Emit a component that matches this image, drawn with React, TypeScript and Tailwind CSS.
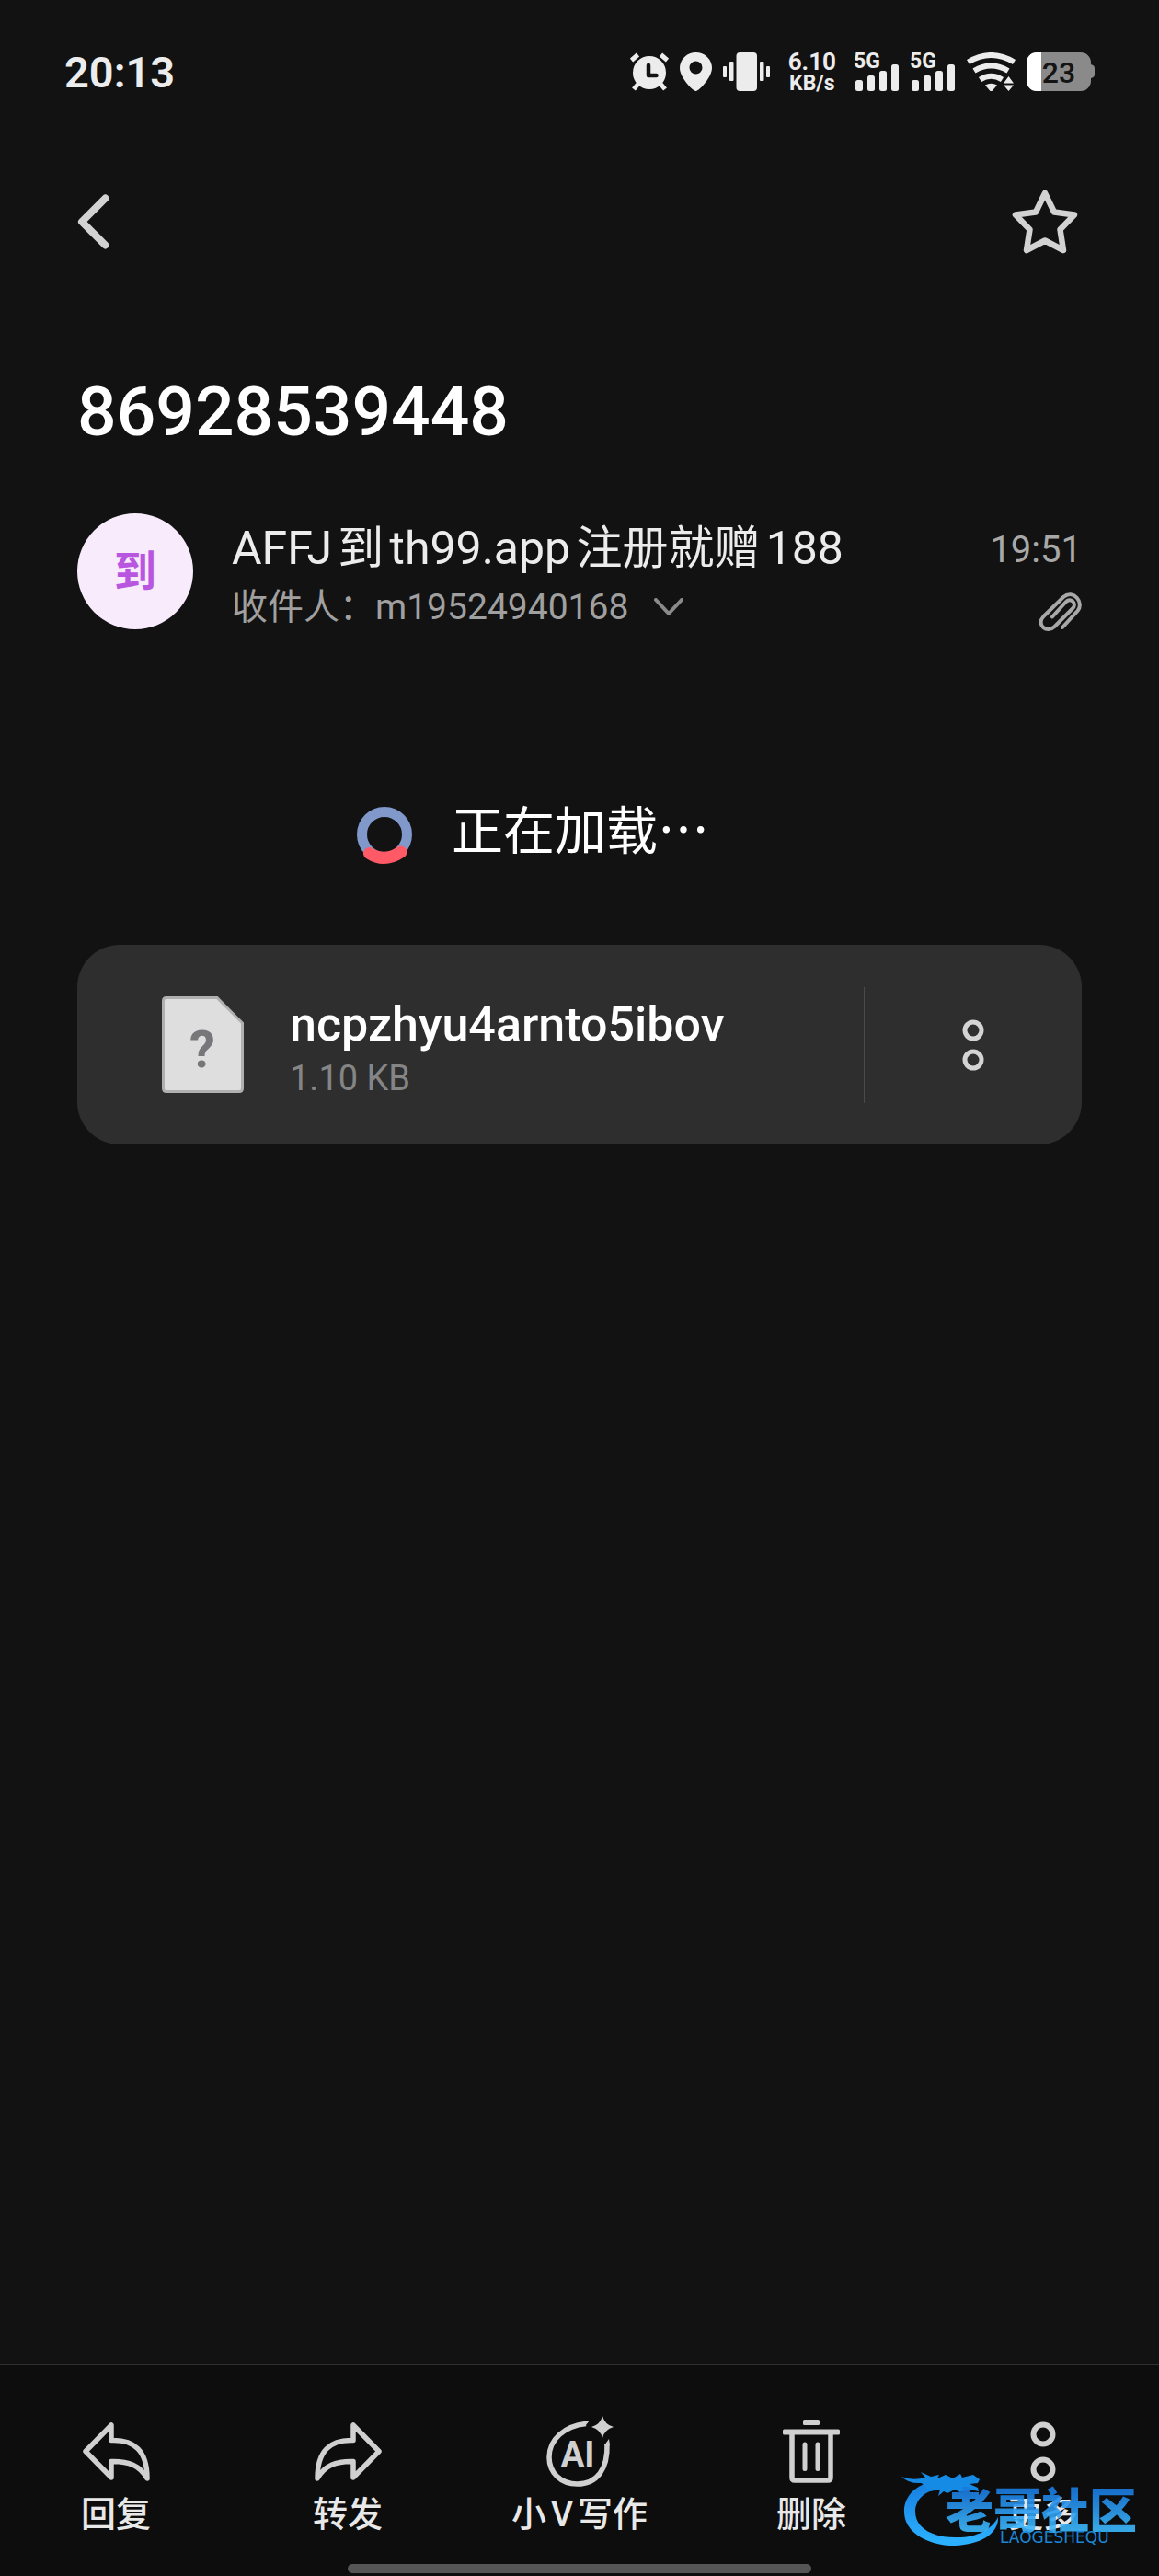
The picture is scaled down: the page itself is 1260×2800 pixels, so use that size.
import type { ReactNode } from "react"

type ToolbarAction = {
    key: string
    label: string
    icon: ReactNode
}

function AlarmIcon() {
    return (
        <svg width="42" height="42" viewBox="0 0 42 42" fill="none" aria-hidden="true">
            <circle cx="21" cy="22" r="18" fill="#ececec" />
            <path d="M1.500 8.500 8.500 2.500M40.500 8.500 33.500 2.500" stroke="#ececec" strokeWidth="5" />
            <path d="M9 34 4 40M33 34l5 6" stroke="#ececec" strokeWidth="5" />
            <path d="M20 14v11h8.500" stroke="#121212" strokeWidth="4.500" strokeLinecap="round" strokeLinejoin="round" />
        </svg>
    )
}

function LocationIcon() {
    return (
        <svg width="35" height="42" viewBox="0 0 35 42" fill="#ececec" fillRule="evenodd" aria-hidden="true">
            <path d="M17.500 42C14 42 0 27 0 17a17.500 17 0 0 1 35 0c0 10-14 25-17.500 25ZM17.500 9.500a7 7 0 1 0 0 14 7 7 0 0 0 0-14Z" />
        </svg>
    )
}

function VibrateIcon() {
    return (
        <svg width="51" height="42" viewBox="0 0 51 42" fill="#ececec" aria-hidden="true">
            <rect x="14.500" width="22.500" height="42" rx="4" />
            <rect x="7" y="10" width="4.500" height="21" rx="1" />
            <rect x="40" y="10" width="4.500" height="21" rx="1" />
            <rect y="15" width="4" height="12" rx="1" />
            <rect x="47" y="15" width="4" height="12" rx="1" />
        </svg>
    )
}

function SignalIcon() {
    return (
        <svg className="overflow-visible" width="49" height="42" viewBox="0 0 49 42" fill="#ececec" aria-label="5G">
            <text x="-1" y="17" fontSize="23" fontWeight="700">5G</text>
            <rect x="1" y="30" width="8" height="12" rx="2.500" />
            <rect x="14" y="25" width="8" height="17" rx="2.500" />
            <rect x="27" y="20" width="8" height="22" rx="2.500" />
            <rect x="40" y="13" width="8" height="29" rx="2.500" />
        </svg>
    )
}

function WifiIcon() {
    return (
        <svg width="53" height="42" viewBox="0 0 53 42" fill="none" aria-hidden="true">
            <path d="M1.500 10.500Q26.500-4.500 51.500 10.500M8 20Q26.500 9 45 20M14.500 29.500Q26.500 22 38.500 29.500" stroke="#ececec" strokeWidth="6" />
            <path d="M20 35.500Q26.500 32 33 35.500L28 41.500Q26.500 42.500 25 41.500Z" fill="#ececec" />
            <path d="M38 34.500 45.500 24 53 34.500 45.500 44Z" fill="#121212" />
            <path d="M40 33.500h11L45.500 26ZM40 35.500h11L45.500 42Z" fill="#ececec" />
        </svg>
    )
}

function BatteryIcon() {
    return (
        <svg className="overflow-visible" width="74" height="42" viewBox="0 0 74 42" aria-label="23%">
            <path d="M11 0h48a11 11 0 0 1 11 11v2q4 1 4 4v7q0 3-4 4v3a11 11 0 0 1-11 11H11A11 11 0 0 1 0 31V11A11 11 0 0 1 11 0Z" fill="#8a8a8a" />
            <path d="M16 0v42h-5A11 11 0 0 1 0 31V11A11 11 0 0 1 11 0Z" fill="#fff" />
            <text x="35" y="33" fontSize="32" fontWeight="500" textAnchor="middle" fill="#141414">23</text>
        </svg>
    )
}

function BackIcon() {
    return (
        <svg width="35" height="60" viewBox="0 0 35 60" fill="none" aria-hidden="true">
            <path d="M30.500 4.500 5 30l25.500 25.500" stroke="#d2d2d2" strokeWidth="8" strokeLinecap="round" strokeLinejoin="round" />
        </svg>
    )
}

function StarIcon() {
    return (
        <svg width="72" height="70" viewBox="0 0 72 70" fill="none" aria-hidden="true">
            <path d="M36 4 46 24.500 68 27.500 52.500 43.500 56 66 36 55.500 16 66 19.500 43.500 4 27.500 26 24.500Z" stroke="#d2d2d2" strokeWidth="6.500" strokeLinejoin="round" />
        </svg>
    )
}

function PaperclipIcon() {
    return (
        <svg width="47" height="42" viewBox="0 0 47 42" fill="none" role="img" aria-label="附件">
            <path
                d="M26 38 42.500 20C50 11 38-4 27 5L5.500 26C-3 35 9 45 17.500 37L37.500 17C42 11 34.500 5 29.500 10.500L15 26.500"
                stroke="#a8a8a8"
                strokeWidth="4"
                strokeLinecap="round"
            />
        </svg>
    )
}

function UnknownFileIcon() {
    return (
        <svg className="shrink-0" width="89" height="105" viewBox="0 0 89 105" aria-hidden="true">
            <path d="M5 1.500H60L87.500 29V100q0 3.500-3.500 3.500H5Q1.500 103.500 1.500 100V5Q1.500 1.500 5 1.500Z" fill="#dedede" stroke="#b0b0b0" strokeWidth="3" />
            <text x="44" y="77" fontSize="56" fontWeight="700" textAnchor="middle" fill="#77777b">?</text>
        </svg>
    )
}

function ReplyIcon() {
    return (
        <svg width="73" height="64" viewBox="0 0 73 64" fill="none" stroke="#d0d0d0" strokeWidth="5.500" strokeLinejoin="round" aria-hidden="true">
            <path d="M3 31.500 31 3V19.500C56 18.500 70 31 70 61 62 47 50 42 31 42.500V60Z" />
        </svg>
    )
}

function ForwardIcon() {
    return (
        <svg width="73" height="64" viewBox="0 0 73 64" fill="none" stroke="#d0d0d0" strokeWidth="5.500" strokeLinejoin="round" aria-hidden="true">
            <path d="M70 31.500 42 3V19.500C17 18.500 3 31 3 61 11 47 23 42 42 42.500V60Z" />
        </svg>
    )
}

function AiIcon() {
    return (
        <svg width="73" height="77" viewBox="0 0 73 77" fill="none" aria-hidden="true">
            <path d="M43 8.500C20 11 3 25 3 45 3 62 16 74 33.500 74 55 74 67 58 66 30" stroke="#d0d0d0" strokeWidth="5.500" />
            <path d="M40 6 47 5 42 11ZM63 32 68 25 69 32Z" fill="#d0d0d0" />
            <path d="M61 0Q63.500 9.500 73 12 63.500 14.500 61 24 58.500 14.500 49 12 58.500 9.500 61 0Z" fill="#d0d0d0" />
            <text x="34" y="55" fontSize="38" fontWeight="700" textAnchor="middle" fill="#d0d0d0">AI</text>
        </svg>
    )
}

function TrashIcon() {
    return (
        <svg width="62" height="69" viewBox="0 0 62 69" fill="none" aria-hidden="true">
            <rect x="22" width="18" height="6" rx="1.500" fill="#d0d0d0" />
            <rect y="10.500" width="62" height="6" rx="1.500" fill="#d0d0d0" />
            <path d="M10 14V63q0 3 3 3H49q3 0 3-3V14" stroke="#d0d0d0" strokeWidth="5.500" />
            <path d="M24 27V53.500M38 27V53.500" stroke="#d0d0d0" strokeWidth="5" strokeLinecap="round" />
        </svg>
    )
}

function MoreIcon() {
    return (
        <svg width="28" height="66" viewBox="0 0 28 66" fill="none" stroke="#d0d0d0" strokeWidth="6" aria-hidden="true">
            <circle cx="14" cy="14" r="10.500" />
            <circle cx="14" cy="52" r="10.500" />
        </svg>
    )
}

// Community logo shown over the right end of the toolbar
function CommunityBadge() {
    return (
        <svg
            className="pointer-events-none absolute right-5 bottom-8 overflow-visible"
            width="260"
            height="86"
            viewBox="0 0 260 86"
            role="img"
            aria-label="老哥社区 LAOGESHEQU"
        >
            <defs>
                <linearGradient id="badgeBlue" gradientUnits="userSpaceOnUse" x1="0" y1="10" x2="0" y2="80">
                    <stop offset="0" stopColor="#1478dd" />
                    <stop offset="1" stopColor="#2bb0ff" />
                </linearGradient>
                <linearGradient id="badgeText" gradientUnits="userSpaceOnUse" x1="0" y1="26" x2="0" y2="66">
                    <stop offset="0" stopColor="#1a7ce0" />
                    <stop offset="1" stopColor="#3bb6fc" />
                </linearGradient>
            </defs>
            <path
                d="M46 15C16 14 2 32 3 49 4 72 30 85 58 85 86 84 106 72 105 54 98 68 80 77 58 76 34 76 15 66 15 48 15 34 28 23 44 24Z"
                fill="url(#badgeBlue)"
            />
            <path
                d="M0 10Q12 15 26 11L21 5 32 10 41 8 39 12 48 8 56 12 64 7 66 11 78 8 85 13 83 17 74 18 83 22 84 26 74 24 64 27 58 24 50 28 46 26 40 31 42 24 30 26 22 17Q8 18 0 10Z"
                fill="#168be6"
            />
            <text x="48" y="66" fontSize="52" fontWeight="900" fill="url(#badgeText)" fillOpacity="0.9">老哥社区</text>
            <text x="107" y="82" fontSize="17" fill="#1c86d6" fontFamily="'DejaVu Sans', sans-serif">LAOGESHEQU</text>
        </svg>
    )
}

const actions: ToolbarAction[] = [
    { key: "reply", label: "回复", icon: <ReplyIcon /> },
    { key: "forward", label: "转发", icon: <ForwardIcon /> },
    { key: "write", label: "小V写作", icon: <AiIcon /> },
    { key: "delete", label: "删除", icon: <TrashIcon /> },
    { key: "more", label: "更多", icon: <MoreIcon /> },
]

function StatusBar() {
    return (
        <div className="flex h-[42px] items-center justify-between px-[70px] text-[#ececec]">
            <span className="pt-0.5 text-[47px] leading-[48px] font-semibold">20:13</span>
            <div className="flex items-center gap-3">
                <AlarmIcon />
                <LocationIcon />
                <VibrateIcon />
                <div className="mx-2 flex flex-col items-center pt-0.5 font-bold">
                    <span className="text-[26px] leading-[24px]">6.10</span>
                    <span className="text-[23px] leading-[24px]">KB/s</span>
                </div>
                <SignalIcon />
                <SignalIcon />
                <WifiIcon />
                <BatteryIcon />
            </div>
        </div>
    )
}

function AttachmentCard({ name, size }: { name: string; size: string }) {
    return (
        <div className="flex h-[217px] items-center rounded-[46px] bg-[#2e2e2e]">
            <div className="flex min-w-0 flex-1 items-center gap-[50px] pl-[92px]">
                <UnknownFileIcon />
                <div className="min-w-0 pt-2">
                    <p className="truncate text-[52px] leading-[64px] font-medium text-white">{name}</p>
                    <p className="text-[38px] leading-[52px] text-[#858585]">{size}</p>
                </div>
            </div>
            <div className="h-[126px] w-px bg-[#4a4a4a]" />
            <button type="button" aria-label="附件选项" className="flex h-full w-[236px] items-center justify-center">
                <svg width="24" height="56" viewBox="0 0 24 56" fill="none" stroke="#d4d4d4" strokeWidth="5" aria-hidden="true">
                    <circle cx="12" cy="12" r="9" />
                    <circle cx="12" cy="44" r="9" />
                </svg>
            </button>
        </div>
    )
}

function App() {
    return (
        <div
            lang="zh-CN"
            className="flex min-h-screen flex-col bg-[#121212] pt-[57px] font-[Roboto,'Noto_Sans_CJK_SC',sans-serif] text-white [text-autospace:normal]"
        >
            <StatusBar />

            <header className="mt-[107px] flex h-[70px] items-center justify-between pr-[88px] pl-[84px]">
                <button type="button" aria-label="返回">
                    <BackIcon />
                </button>
                <button type="button" aria-label="收藏">
                    <StarIcon />
                </button>
            </header>

            <main className="flex-1 px-[84px]">
                <h1 className="mt-[126px] text-[75px] leading-[90px] font-medium">86928539448</h1>

                <section className="mt-[66px] flex items-start">
                    <div className="flex size-[126px] items-center justify-center rounded-full bg-[#f8ebfc] text-[46px] font-bold text-[#b956e0]">
                        到
                    </div>
                    <div className="ml-[42px] min-w-0 flex-1 pt-1.5">
                        <p className="text-[50px] leading-[64px] text-[#ececec]">AFFJ到th99.app注册就赠188</p>
                        <button type="button" className="mt-1 flex items-center gap-7 text-[39px] leading-[56px] text-[#a0a0a0]">
                            收件人：m19524940168
                            <svg width="32" height="20" viewBox="0 0 32 20" fill="none" aria-hidden="true">
                                <path d="M2 2 16 17 30 2" stroke="#8a8a8a" strokeWidth="4" strokeLinecap="round" strokeLinejoin="round" />
                            </svg>
                        </button>
                    </div>
                    <div className="flex flex-col items-end gap-3.5 pt-2">
                        <time className="text-[40px] leading-[64px] text-[#a8a8a8]">19:51</time>
                        <PaperclipIcon />
                    </div>
                </section>

                <div role="status" className="mt-[180px] flex h-[64px] justify-center gap-[42px] pr-[102px]">
                    <svg className="mt-2" width="62" height="64" viewBox="0 0 62 64" fill="none" aria-hidden="true">
                        <circle cx="31" cy="31" r="24.500" stroke="#8098ca" strokeWidth="11" />
                        <path d="M14.500 51.500Q31 62 49 50" stroke="#ff5a66" strokeWidth="13" strokeLinecap="round" />
                    </svg>
                    <span className="text-[56px] leading-[72px]">正在加载⋯</span>
                </div>

                <div className="mt-[95px]">
                    <AttachmentCard name="ncpzhyu4arnto5ibov" size="1.10 KB" />
                </div>
            </main>

            <footer className="relative border-t border-[#303030] bg-[#0d0d0d] pb-[3px]">
                <nav className="grid grid-cols-5 pt-[55px]">
                    {actions.map((action) => (
                        <button key={action.key} type="button" className="flex flex-col items-center">
                            <span className="flex h-[77px] items-center">{action.icon}</span>
                            <span className="mt-1.5 text-[38px] leading-[48px] font-medium text-[#e8e8e8]">{action.label}</span>
                        </button>
                    ))}
                </nav>
                <div className="mx-auto mt-[30px] h-[10px] w-2/5 rounded-full bg-[#555555]" />
                <CommunityBadge />
            </footer>
        </div>
    )
}

export default App
